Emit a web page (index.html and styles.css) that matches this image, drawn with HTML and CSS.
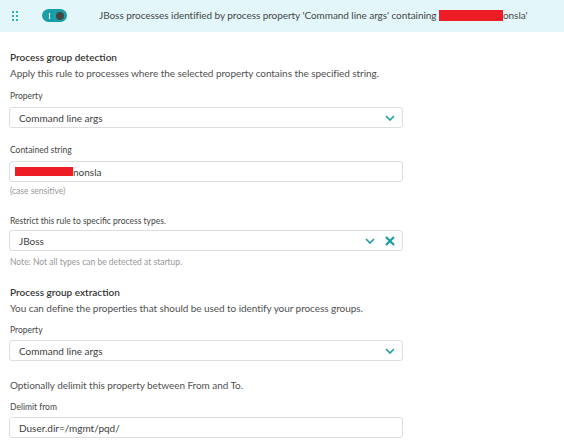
FILE: index.html
```html
<!DOCTYPE html>
<html>
<head>
<meta charset="utf-8">
<link rel="stylesheet" href="styles.css">
</head>
<body>
<div class="header">
  <div class="drag"><i></i><i></i><i></i><i></i><i></i><i></i></div>
  <div class="toggle"><span class="bar"></span><span class="knob"></span></div>
  <div class="htitle">JBoss processes identified by process property 'Command line args' containing <span class="redact hred"></span>onsla'</div>
</div>
<div class="content">
  <div class="title t1">Process group detection</div>
  <div class="desc">Apply this rule to processes where the selected property contains the specified string.</div>
  <div class="label l1">Property</div>
  <div class="field f1"><span class="value">Command line args</span><svg class="chev" width="10" height="6" viewBox="0 0 10 6"><path d="M1 1 L5 5 L9 1" fill="none" stroke="#1a9ca6" stroke-width="1.6"/></svg></div>
  <div class="label l2">Contained string</div>
  <div class="field f2"><span class="value"><span class="redact ired"></span>nonsla</span></div>
  <div class="note n1">(case sensitive)</div>
  <div class="label l3">Restrict this rule to specific process types.</div>
  <div class="field f3"><span class="value">JBoss</span><svg class="chev" width="10" height="6" viewBox="0 0 10 6"><path d="M1 1 L5 5 L9 1" fill="none" stroke="#1a9ca6" stroke-width="1.6"/></svg><svg class="clear" width="10" height="10" viewBox="0 0 10 10"><path d="M1 1 L9 9 M9 1 L1 9" fill="none" stroke="#1a9ca6" stroke-width="2.2"/></svg></div>
  <div class="note n2">Note: Not all types can be detected at startup.</div>
  <div class="title t2">Process group extraction</div>
  <div class="desc">You can define the properties that should be used to identify your process groups.</div>
  <div class="label l4">Property</div>
  <div class="field f4"><span class="value">Command line args</span><svg class="chev" width="10" height="6" viewBox="0 0 10 6"><path d="M1 1 L5 5 L9 1" fill="none" stroke="#1a9ca6" stroke-width="1.6"/></svg></div>
  <div class="desc d3">Optionally delimit this property between From and To.</div>
  <div class="label l5">Delimit from</div>
  <div class="field f5"><span class="value">Duser.dir=/mgmt/pqd/</span></div>
</div>
</body>
</html>
```
FILE: styles.css
```css
html, body {
  margin: 0;
  padding: 0;
  background: #ffffff;
}
body {
  font-family: Lato, "Liberation Sans", sans-serif;
  color: #454646;
  width: 564px;
  height: 440px;
  overflow: hidden;
}
.header {
  height: 32px;
  background: #e3f6fa;
  display: flex;
  align-items: center;
}
.drag {
  margin-left: 12px;
  width: 6px;
  display: grid;
  grid-template-columns: 2px 2px;
  column-gap: 2px;
  row-gap: 2px;
  margin-top: -1px;
}
.drag i {
  display: block;
  width: 2px;
  height: 2px;
  background: #2fb0bd;
}
.toggle {
  margin-left: 24px;
  width: 25px;
  height: 13px;
  border-radius: 7px;
  background: #1a9ea8;
  display: flex;
  align-items: center;
  margin-top: -1px;
}
.toggle .bar {
  width: 1px;
  height: 6px;
  background: #ffffff;
  margin-left: 7px;
}
.toggle .knob {
  width: 8px;
  height: 8px;
  border-radius: 50%;
  background: #454646;
  margin-left: 6px;
}
.htitle {
  margin-left: 32px;
  font-size: 10px;
  letter-spacing: -0.06px;
  line-height: 14px;
  color: #454646;
  white-space: pre;
  margin-top: -2px;
}
.redact {
  display: inline-block;
  background: #ee1c25;
}
.hred {
  width: 64px;
  height: 11px;
  vertical-align: -2px;
}
.ired {
  width: 58px;
  height: 9px;
  margin-left: -4px;
}
.content {
  padding-left: 9px;
  display: flex;
  flex-direction: column;
  align-items: flex-start;
}
.title {
  font-size: 10px;
  font-weight: 600;
  line-height: 14px;
  color: #353535;
  padding-left: 1px;
}
.desc {
  font-size: 10px;
  letter-spacing: -0.06px;
  line-height: 14px;
  color: #505050;
  padding-left: 1px;
  margin-top: 2px;
}
.label, .note {
  font-size: 8.5px;
  line-height: 12px;
  padding-left: 1px;
}
.label { color: #454646; }
.note { color: #999999; }
.field {
  box-sizing: border-box;
  width: 394px;
  height: 21px;
  border: 1px solid #dedede;
  border-radius: 3px;
  display: flex;
  align-items: center;
  padding-left: 9px;
  padding-right: 7px;
  font-size: 10px;
  color: #404040;
}
.value {
  flex: 1;
  display: flex;
  align-items: center;
}
.clear { margin-left: 10px; }
.t1 { margin-top: 18px; }
.l1 { margin-top: 10px; }
.f1 { margin-top: 5px; }
.l2 { margin-top: 16px; }
.f2 { margin-top: 5px; }
.n1 { margin-top: 3px; }
.l3 { margin-top: 18px; }
.f3 { margin-top: 3px; }
.n2 { margin-top: 5px; }
.t2 { margin-top: 17px; }
.l4 { margin-top: 9px; }
.f4 { margin-top: 4px; }
.d3 { margin-top: 17px; }
.l5 { margin-top: 9px; }
.f5 { margin-top: 4px; }
```
